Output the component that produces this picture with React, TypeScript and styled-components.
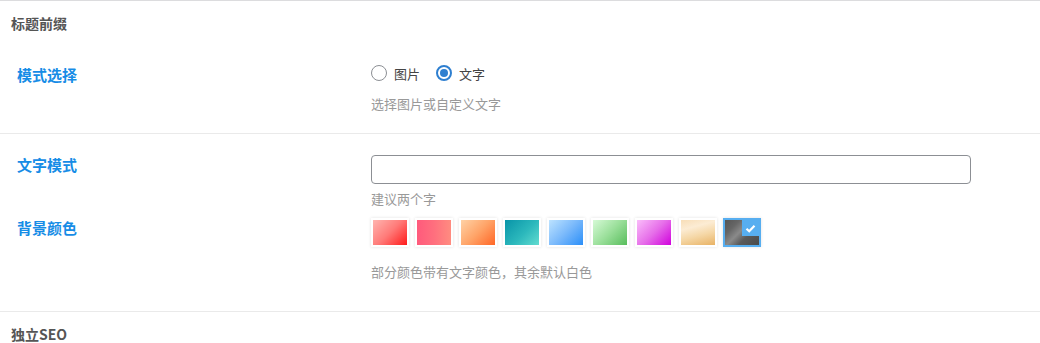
import React from "react";
import styled, { createGlobalStyle } from "styled-components";

const Global = createGlobalStyle`
  html, body { margin: 0; padding: 0; background: #fff; }
  body { font-family: "Noto Sans CJK SC", "Noto Sans", sans-serif; color: #333; }
`;

const Page = styled.div`
  width: 1040px;
  border-top: 1px solid #dcdcde;
`;

const SectionTitle = styled.h3`
  margin: 0;
  padding: 12px 11px 0;
  font-size: 14px;
  line-height: 20px;
  font-weight: 700;
  color: #555;
`;

const Section = styled.div<{ $pt: number; $pb: number; $line?: boolean }>`
  padding: ${(p) => p.$pt}px 0 ${(p) => p.$pb}px;
  border-bottom: ${(p) => (p.$line ? "1px solid #eaeaea" : "none")};
  display: flex;
  flex-direction: column;
  gap: 10px;
`;

const Row = styled.div`
  display: flex;
  align-items: flex-start;
`;

const Label = styled.div<{ $mt?: number }>`
  width: 371px;
  flex-shrink: 0;
  padding-left: 17px;
  box-sizing: border-box;
  margin-top: ${(p) => p.$mt ?? 0}px;
  font-size: 15px;
  line-height: 20px;
  font-weight: 700;
  color: #168ce6;
`;

const Field = styled.div`
  display: flex;
  flex-direction: column;
`;

const Help = styled.p<{ $mt: number }>`
  margin: ${(p) => p.$mt}px 0 0;
  font-size: 13px;
  line-height: 18px;
  color: #999;
`;

const RadioGroup = styled.div`
  display: flex;
  align-items: center;
  height: 20px;
  gap: 16px;
`;

const RadioLabel = styled.label`
  display: flex;
  align-items: center;
  gap: 7px;
  font-size: 13px;
  color: #444;
`;

const RadioCircle = styled.span<{ $on?: boolean }>`
  width: 16px;
  height: 16px;
  box-sizing: border-box;
  border-radius: 50%;
  border: ${(p) => (p.$on ? "2px solid #2e7fd0" : "1px solid #8c8f94")};
  display: flex;
  align-items: center;
  justify-content: center;
  background: #fff;
  &::after {
    content: "";
    display: ${(p) => (p.$on ? "block" : "none")};
    width: 8px;
    height: 8px;
    border-radius: 50%;
    background: #2e7fd0;
  }
`;

const TextInput = styled.input`
  width: 600px;
  height: 29px;
  box-sizing: border-box;
  border: 1px solid #8c8f94;
  border-radius: 4px;
  padding: 0 8px;
  font-size: 14px;
  outline: none;
`;

const Swatches = styled.div`
  display: flex;
  gap: 6px;
`;

const Swatch = styled.span<{ $bg: string; $on?: boolean }>`
  position: relative;
  width: 38px;
  height: 29px;
  box-sizing: border-box;
  border: 2px solid ${(p) => (p.$on ? "#57aef0" : "#fff")};
  box-shadow: 0 0 3px rgba(0, 0, 0, 0.12);
  background: ${(p) => p.$bg};
  background-clip: padding-box;
`;

const Corner = styled.span`
  position: absolute;
  top: 0;
  right: 0;
  width: 17px;
  height: 16px;
  background: #57aef0;
  display: flex;
  align-items: center;
  justify-content: center;
`;

const colors = [
  "linear-gradient(135deg, #ffb5b0 0%, #ff7a78 50%, #ff1a1a 100%)",
  "linear-gradient(90deg, #ff5a7c 0%, #ff6f7e 50%, #ff8c80 100%)",
  "linear-gradient(135deg, #ffd2a6 0%, #ffa468 50%, #ff6626 100%)",
  "linear-gradient(135deg, #0894a8 0%, #2cb8bc 55%, #62dcd0 100%)",
  "linear-gradient(135deg, #bde3ff 0%, #7ab9fb 50%, #2a8ef8 100%)",
  "linear-gradient(135deg, #d6fad6 0%, #9adf9a 50%, #58bd5c 100%)",
  "linear-gradient(135deg, #fabdfa 0%, #e66ee9 50%, #d000dc 100%)",
  "linear-gradient(165deg, #f8deb8 0%, #fcecd4 30%, #f5d7a6 60%, #e8b264 100%)",
  "linear-gradient(135deg, #555 0%, #666 25%, #8a8a8a 45%, #5a5a5a 65%, #4a4a4a 100%)",
];

export default function App() {
  return (
    <>
      <Global />
      <Page>
        <SectionTitle>标题前缀</SectionTitle>
        <Section $pt={30} $pb={20} $line>
          <Row>
            <Label $mt={2}>模式选择</Label>
            <Field>
              <RadioGroup>
                <RadioLabel>
                  <RadioCircle />
                  图片
                </RadioLabel>
                <RadioLabel>
                  <RadioCircle $on />
                  文字
                </RadioLabel>
              </RadioGroup>
              <Help $mt={12}>选择图片或自定义文字</Help>
            </Field>
          </Row>
        </Section>
        <Section $pt={21} $pb={30} $line>
          <Row>
            <Label>文字模式</Label>
            <Field>
              <TextInput type="text" />
              <Help $mt={6}>建议两个字</Help>
            </Field>
          </Row>
          <Row>
            <Label>背景颜色</Label>
            <Field>
              <Swatches>
                {colors.map((c, i) => (
                  <Swatch key={i} $bg={c} $on={i === colors.length - 1}>
                    {i === colors.length - 1 && (
                      <Corner>
                        <svg width="11" height="9" viewBox="0 0 11 9">
                          <path d="M1.5 4.8 L4.2 7.3 L9.5 1.8" fill="none" stroke="#fff" strokeWidth="2.2" />
                        </svg>
                      </Corner>
                    )}
                  </Swatch>
                ))}
              </Swatches>
              <Help $mt={16}>部分颜色带有文字颜色，其余默认白色</Help>
            </Field>
          </Row>
        </Section>
        <SectionTitle>独立SEO</SectionTitle>
      </Page>
    </>
  );
}
